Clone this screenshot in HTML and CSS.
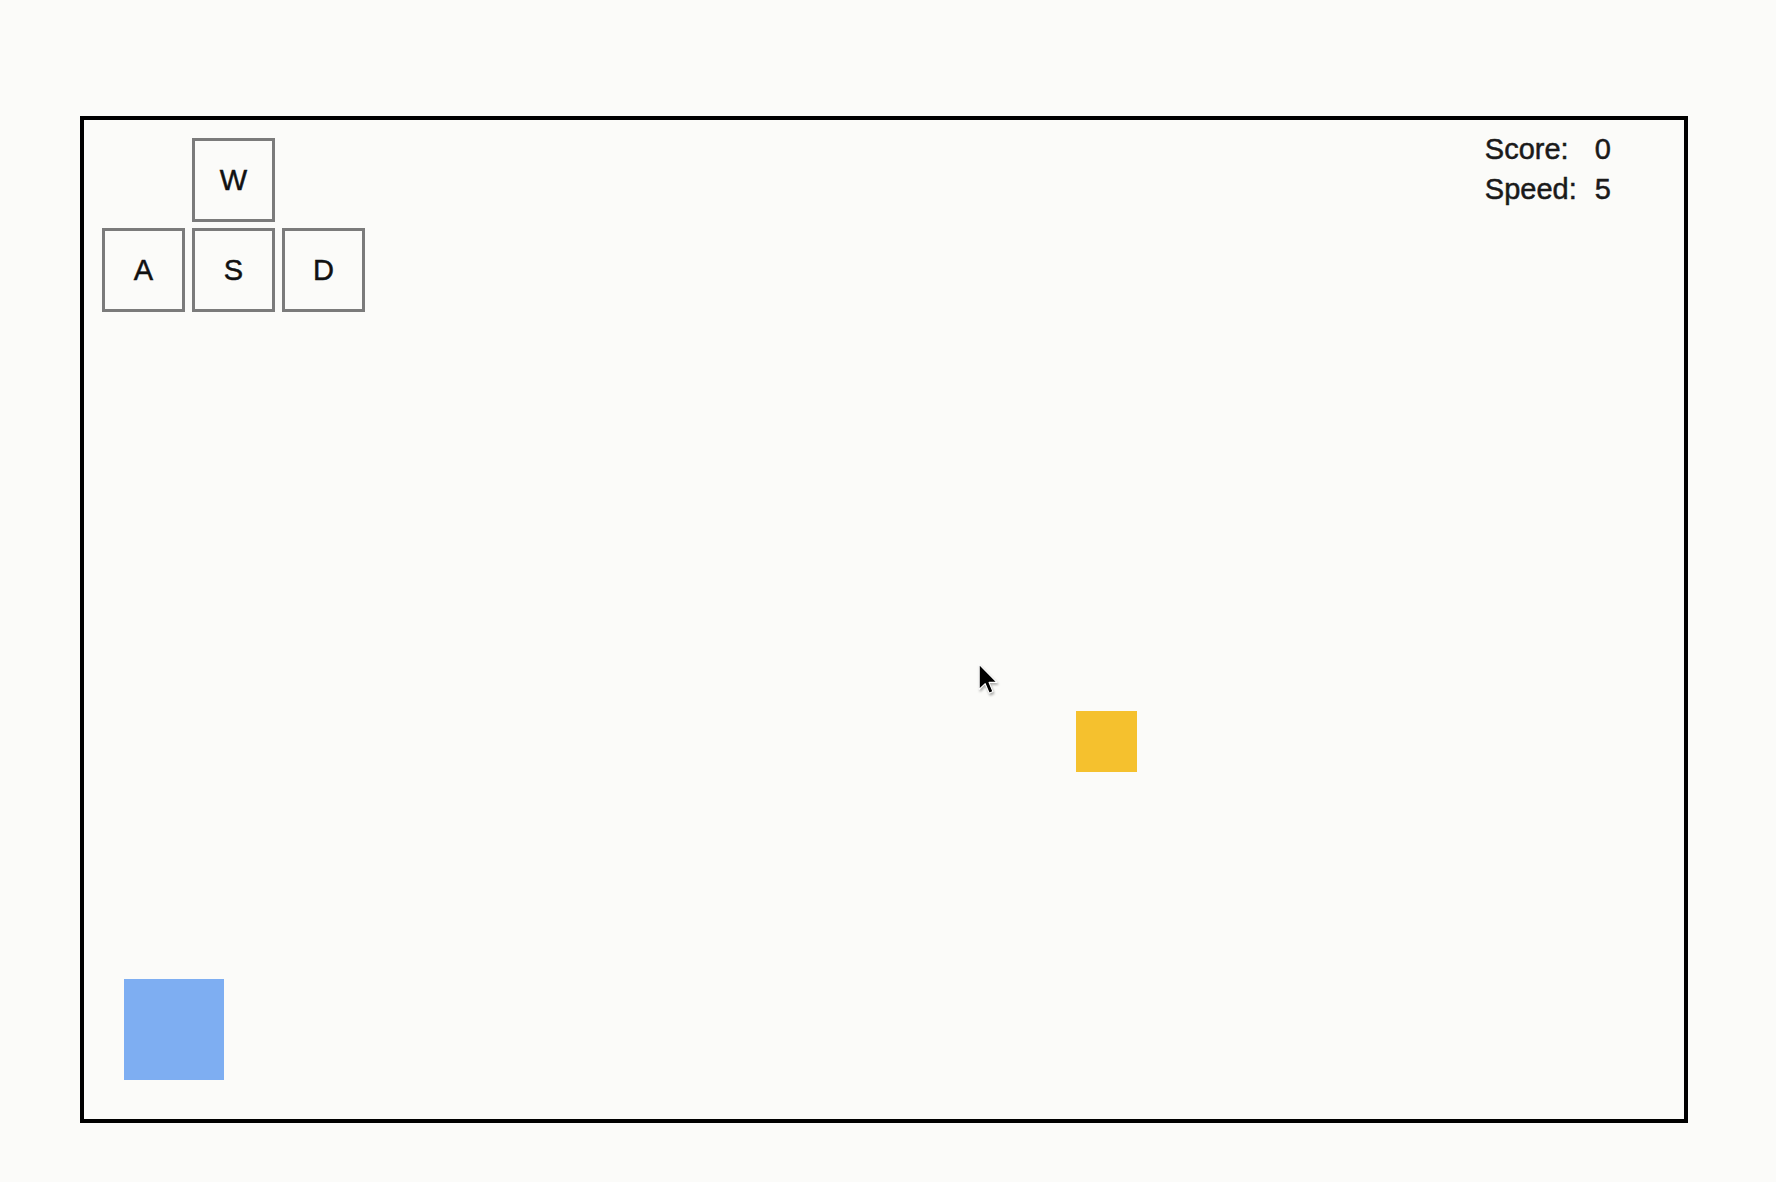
FILE: index.html
```html
<!DOCTYPE html>
<html lang="en">
<head>
<meta charset="utf-8">
<title>WASD Game</title>
<link rel="stylesheet" href="styles.css">
</head>
<body>
  <div class="board">
    <div class="hud">
      <div class="keys">
        <div class="key key-w">W</div>
        <div class="key key-a">A</div>
        <div class="key key-s">S</div>
        <div class="key key-d">D</div>
      </div>
      <div class="stats">
        <span class="label">Score:</span><span class="value">0</span>
        <span class="label">Speed:</span><span class="value">5</span>
      </div>
    </div>
    <div class="piece target" style="left:992px; top:591px;"></div>
    <div class="piece player" style="left:40px; top:859px;"></div>
    <svg class="cursor" style="left:893px; top:542px;" width="24" height="34" viewBox="0 0 22 31">
      <path d="M2 2 L2 25 L7.5 19.8 L11.2 28.5 L14.6 27 L11 18.6 L18.3 18.6 Z" fill="#000" stroke="#fff" stroke-width="1" stroke-linejoin="round"/>
    </svg>
  </div>
</body>
</html>
```

FILE: styles.css
```css
html, body {
  margin: 0;
  padding: 0;
}

body {
  background: #fbfbf9;
  font-family: "Liberation Sans", Arial, sans-serif;
  color: #111;
  padding-top: 116px;
  padding-left: 80px;
  height: 1182px;
  box-sizing: border-box;
  overflow: hidden;
}

.board {
  position: relative;
  box-sizing: border-box;
  width: 1608px;
  height: 1007px;
  border: 4px solid #000;
  padding: 18px;
}

.hud {
  display: flex;
  align-items: flex-start;
}

.keys {
  display: grid;
  grid-template-columns: repeat(3, 83px);
  grid-template-rows: 84px 84px;
  column-gap: 7px;
  row-gap: 6px;
}

.key {
  box-sizing: border-box;
  border: 3px solid #7b7b7b;
  display: flex;
  align-items: center;
  justify-content: center;
  font-size: 29px;
  color: #111;
  -webkit-text-stroke: 0.5px #111;
}

.key-w { grid-column: 2; grid-row: 1; }
.key-a { grid-column: 1; grid-row: 2; }
.key-s { grid-column: 2; grid-row: 2; }
.key-d { grid-column: 3; grid-row: 2; }

.stats {
  margin-left: auto;
  margin-right: 55px;
  margin-top: -9px;
  display: grid;
  grid-template-columns: 110px auto;
  font-size: 29px;
  line-height: 40px;
  color: #1a1a1a;
  -webkit-text-stroke: 0.5px #1a1a1a;
}

.piece {
  position: absolute;
}

.target {
  width: 61px;
  height: 61px;
  background: #f5c12e;
}

.player {
  width: 100px;
  height: 101px;
  background: #7eaef2;
}

.cursor {
  position: absolute;
  filter: drop-shadow(1px 2px 1px rgba(0, 0, 0, 0.3));
}
```
